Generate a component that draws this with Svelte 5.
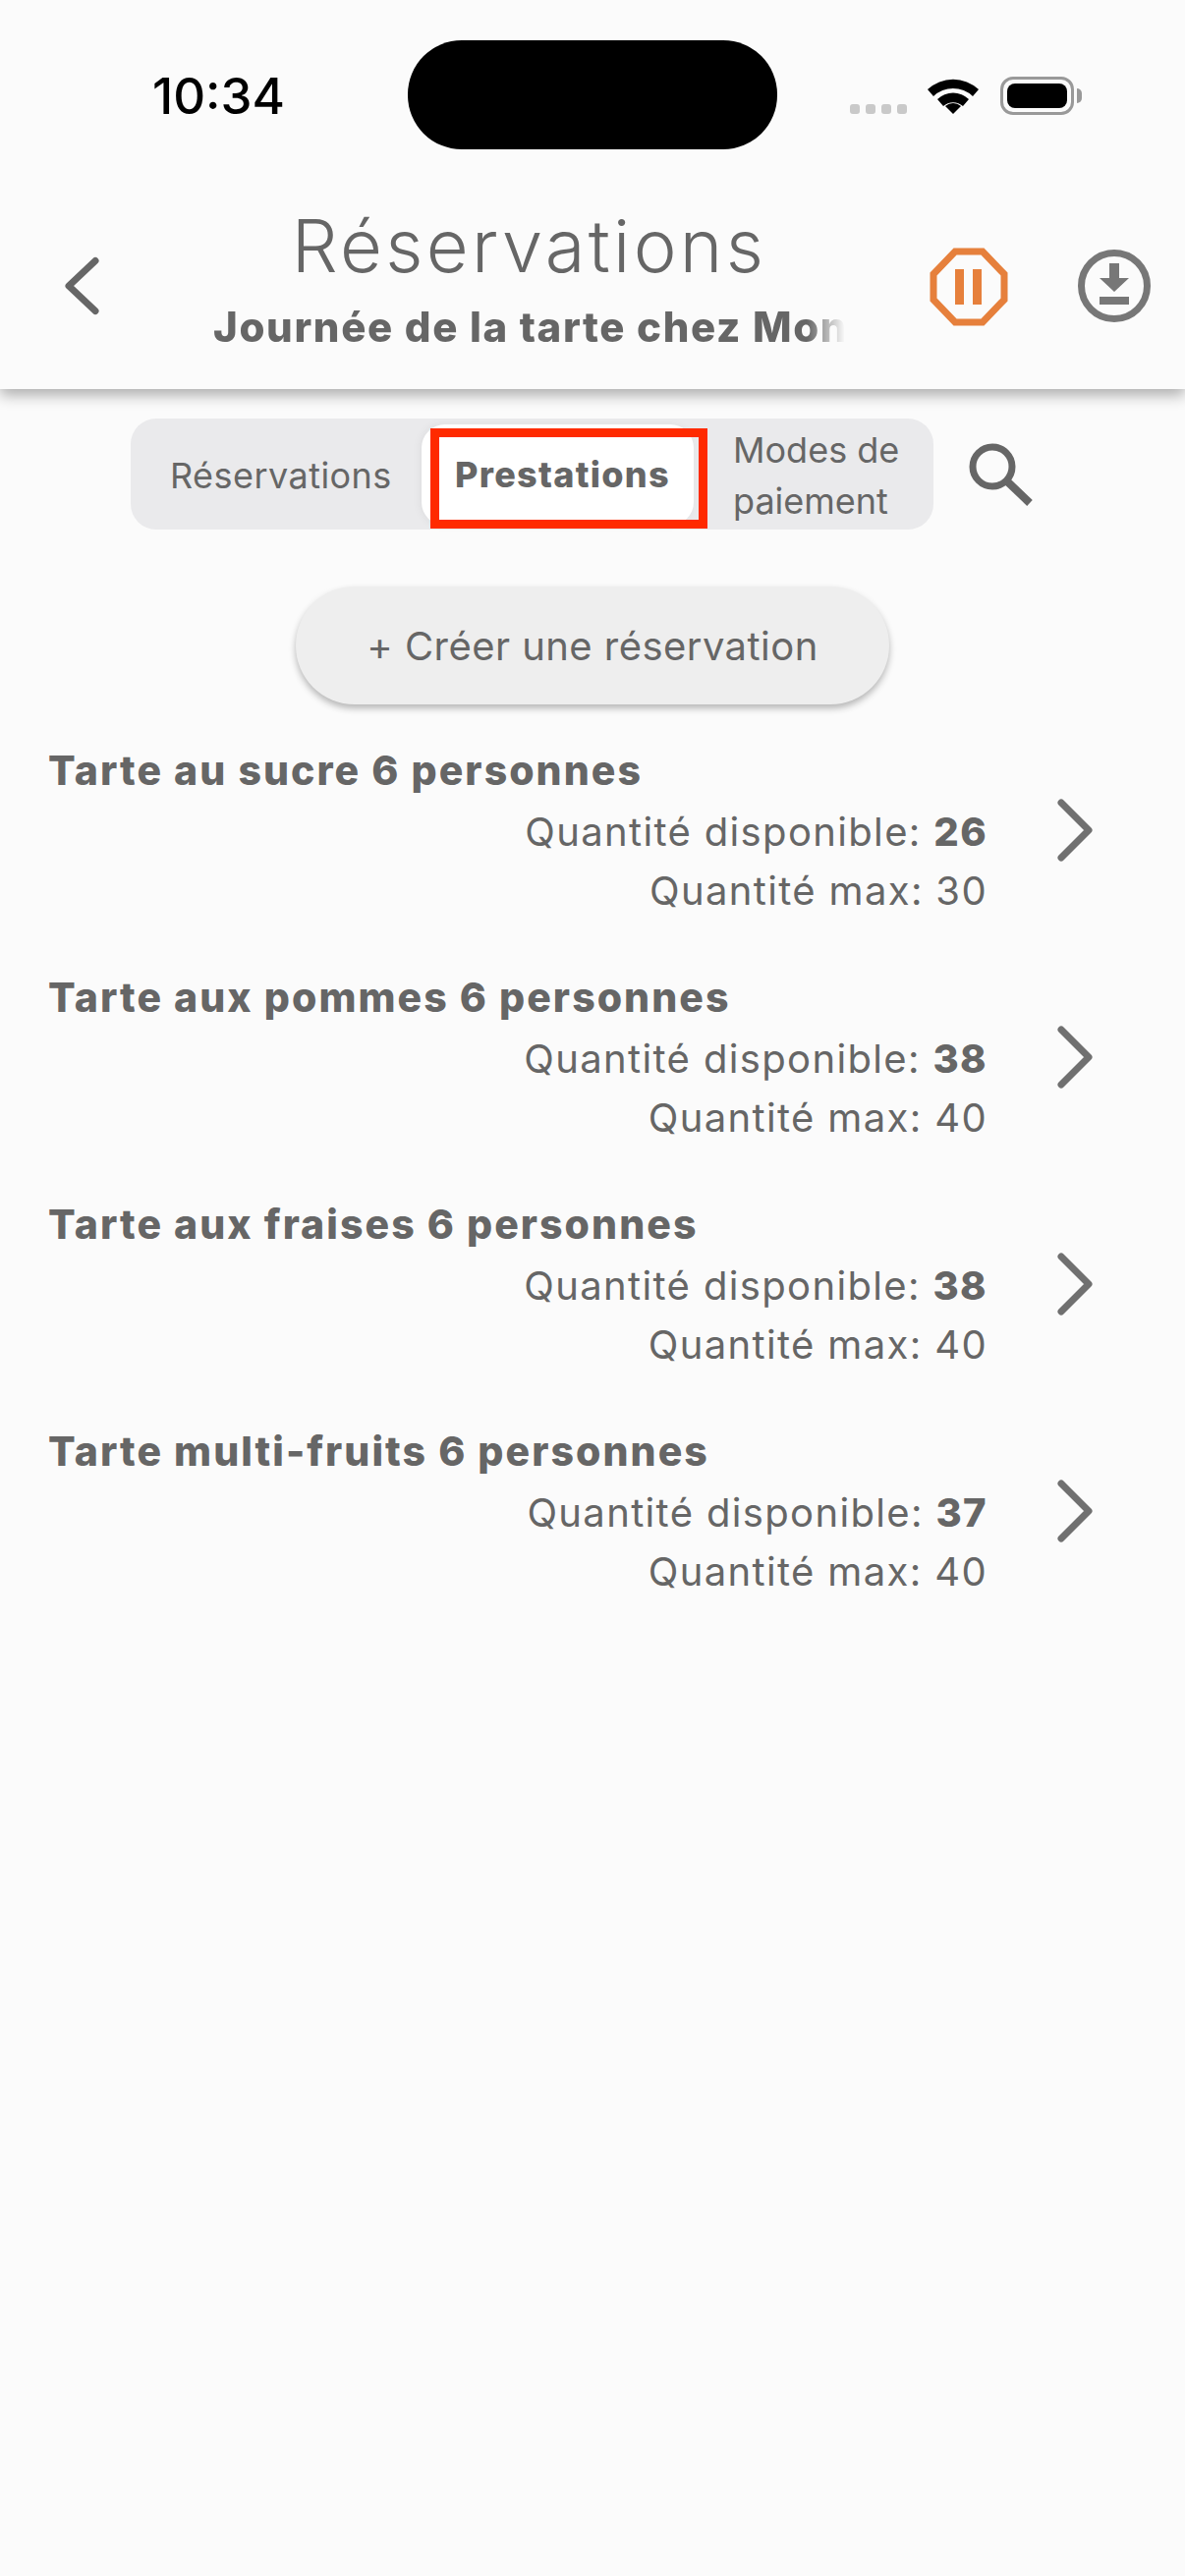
<script>
  const rows = [
    { name: 'Tarte au sucre 6 personnes', avail: 26, max: 30 },
    { name: 'Tarte aux pommes 6 personnes', avail: 38, max: 40 },
    { name: 'Tarte aux fraises 6 personnes', avail: 38, max: 40 },
    { name: 'Tarte multi-fruits 6 personnes', avail: 37, max: 40 }
  ];
</script>

<div class="page">
  <header class="header">
    <div class="status">
      <span class="time">10:34</span>
      <div class="island"></div>
      <div class="indicators">
        <div class="dots"><i></i><i></i><i></i><i></i></div>
        <svg class="wifi" viewBox="0 0 52 38" width="52" height="38">
          <path d="M0 13 A38 38 0 0 1 52 13 L46 20 A29 29 0 0 0 6 20 Z" fill="#000" />
          <path d="M10 24 A23 23 0 0 1 42 24 L36 31 A15 15 0 0 0 16 31 Z" fill="#000" transform="translate(0 -1)" />
          <path d="M18 30 A12 12 0 0 1 34 30 L26 38 Z" fill="#000" />
        </svg>
        <div class="battery"><span class="cell"></span></div>
      </div>
    </div>
    <div class="nav">
      <svg class="back" viewBox="0 0 36 62" width="36" height="62">
        <path d="M32 5.5 L5 31 L32 56.5" fill="none" stroke="#666" stroke-width="7" stroke-linecap="round" stroke-linejoin="round" />
      </svg>
      <div class="titles">
        <h1>Réservations</h1>
        <div class="sub"><span>Journée de la tarte chez Mon</span></div>
      </div>
      <svg class="pause" viewBox="0 0 80 80" width="80" height="80">
        <path d="M26 4 H54 L76 27 V53 L54 76 H26 L4 53 V27 Z" fill="none" stroke="#e6803c" stroke-width="7" />
        <rect x="26" y="22" width="9" height="36" fill="#e6803c" />
        <rect x="44" y="22" width="9" height="36" fill="#e6803c" />
      </svg>
      <svg class="download" viewBox="0 0 76 76" width="76" height="76">
        <circle cx="38" cy="38" r="33.5" fill="none" stroke="#777" stroke-width="7" />
        <path d="M33 15 H43 V30 H53 L38 44 L23 30 H33 Z" fill="#777" />
        <rect x="23" y="49" width="30" height="8" fill="#777" />
      </svg>
    </div>
  </header>

  <div class="tools">
    <div class="segments">
      <div class="seg first">Réservations</div>
      <div class="seg active">Prestations</div>
      <div class="seg last">Modes de<br />paiement</div>
      <div class="mark"></div>
    </div>
    <svg class="search" viewBox="0 0 66 66" width="66" height="66">
      <circle cx="25" cy="25" r="20" fill="none" stroke="#666" stroke-width="7" />
      <path d="M39 39 L63 62" stroke="#666" stroke-width="8" fill="none" />
    </svg>
  </div>

  <div class="create"><button>+ Créer une réservation</button></div>

  <div class="list">
    {#each rows as r}
      <div class="row">
        <div class="name">{r.name}</div>
        <div class="detail">
          <div class="qty">
            <div class="line">Quantité disponible: <b>{r.avail}</b></div>
            <div class="line">Quantité max: {r.max}</div>
          </div>
          <svg class="chev" viewBox="0 0 40 64" width="40" height="64">
            <path d="M7 4 L35 32 L7 60" fill="none" stroke="#707070" stroke-width="7" stroke-linecap="round" stroke-linejoin="round" />
          </svg>
        </div>
      </div>
    {/each}
  </div>
</div>

<style>
  :global(body) { margin: 0; background: #fbfbfb; }
  .page { width: 1206px; height: 2622px; overflow: hidden; background: #fbfbfb; color: #666; font-family: Inter, "Noto Sans", sans-serif; }
  .header { height: 396px; background: #fbfbfb; box-shadow: 0 6px 14px rgba(0,0,0,.32); position: relative; z-index: 1; }
  .status { height: 196px; position: relative; display: flex; justify-content: space-between; align-items: flex-start; box-sizing: border-box; padding: 78px 113px 0 155px; }
  .time { font-size: 51px; line-height: 40px; font-weight: 500; color: #000; letter-spacing: 0; }
  .island { position: absolute; left: 415px; top: 41px; width: 376px; height: 111px; border-radius: 55px; background: #000; }
  .indicators { display: flex; align-items: flex-start; }
  .dots { display: flex; gap: 6px; margin: 28px 21px 0 0; }
  .dots i { width: 10px; height: 10px; border-radius: 3px; background: #c9c9c9; }
  .wifi { margin-right: 22px; }
  .battery { width: 75px; height: 39px; box-sizing: border-box; border: 3px solid #999; border-radius: 13px; padding: 4px; position: relative; }
  .battery::after { content: ""; position: absolute; right: -11px; top: 9px; width: 5px; height: 15px; background: #999; border-radius: 0 5px 5px 0; }
  .cell { display: block; height: 100%; background: #000; border-radius: 8px; }
  .nav { display: flex; align-items: flex-start; padding-left: 65px; }
  .back { margin-top: 64px; }
  .titles { width: 643px; margin: 14px 0 0 116px; text-align: center; }
  h1 { margin: 0; font-size: 74px; font-weight: 300; line-height: 80px; letter-spacing: 3.3px; white-space: nowrap; }
  .sub { margin-top: 18px; font-size: 42px; font-weight: 800; line-height: 50px; letter-spacing: 1.65px; white-space: nowrap; overflow: hidden; text-align: left; -webkit-mask-image: linear-gradient(90deg, #000 94%, transparent); mask-image: linear-gradient(90deg, #000 94%, transparent); }
  .pause { margin: 56px 0 0 86px; }
  .download { margin: 57px 0 0 70px; }
  .tools { display: flex; align-items: center; padding: 30px 0 0 133px; }
  .segments { position: relative; display: flex; width: 817px; height: 113px; background: #eaeaec; border-radius: 26px; font-size: 36px; }
  .seg { display: flex; align-items: center; line-height: 52px; }
  .first { width: 296px; padding-left: 40px; box-sizing: border-box; letter-spacing: 0.45px; padding-top: 3px; }
  .active { width: 277px; margin-top: 6px; height: 103px; box-sizing: border-box; padding: 0 0 1px 34px; background: #fff; border-radius: 24px; font-weight: 800; letter-spacing: 1.3px; box-shadow: -2px 0 8px rgba(0,0,0,.05); }
  .last { padding-left: 40px; padding-top: 2px; }
  .mark { position: absolute; left: 305px; top: 10px; width: 282px; height: 102px; box-sizing: border-box; border: 9px solid #ff2a00; }
  .search { margin-left: 35px; }
  .create { display: flex; justify-content: center; padding: 58px 0 0; }
  .create button { width: 604px; height: 120px; margin-right: 0; border: 0; border-radius: 60px; background: #eee; color: #666; font: 400 40px Inter, sans-serif; letter-spacing: 0.45px; box-shadow: 0 4px 7px rgba(0,0,0,.28); }
  .list { padding: 42px 40px 0 49px; display: flex; flex-direction: column; gap: 0; }
  .row { height: 231px; }
  .name { font-size: 41px; line-height: 50px; font-weight: 800; letter-spacing: 2.05px; }
  .detail { display: flex; justify-content: flex-end; align-items: flex-start; margin-top: 8px; }
  .qty { text-align: right; font-size: 40px; line-height: 60px; letter-spacing: 1.35px; }
  .qty b { font-weight: 800; }
  .chev { margin: -4px 53px 0 68px; }
</style>
